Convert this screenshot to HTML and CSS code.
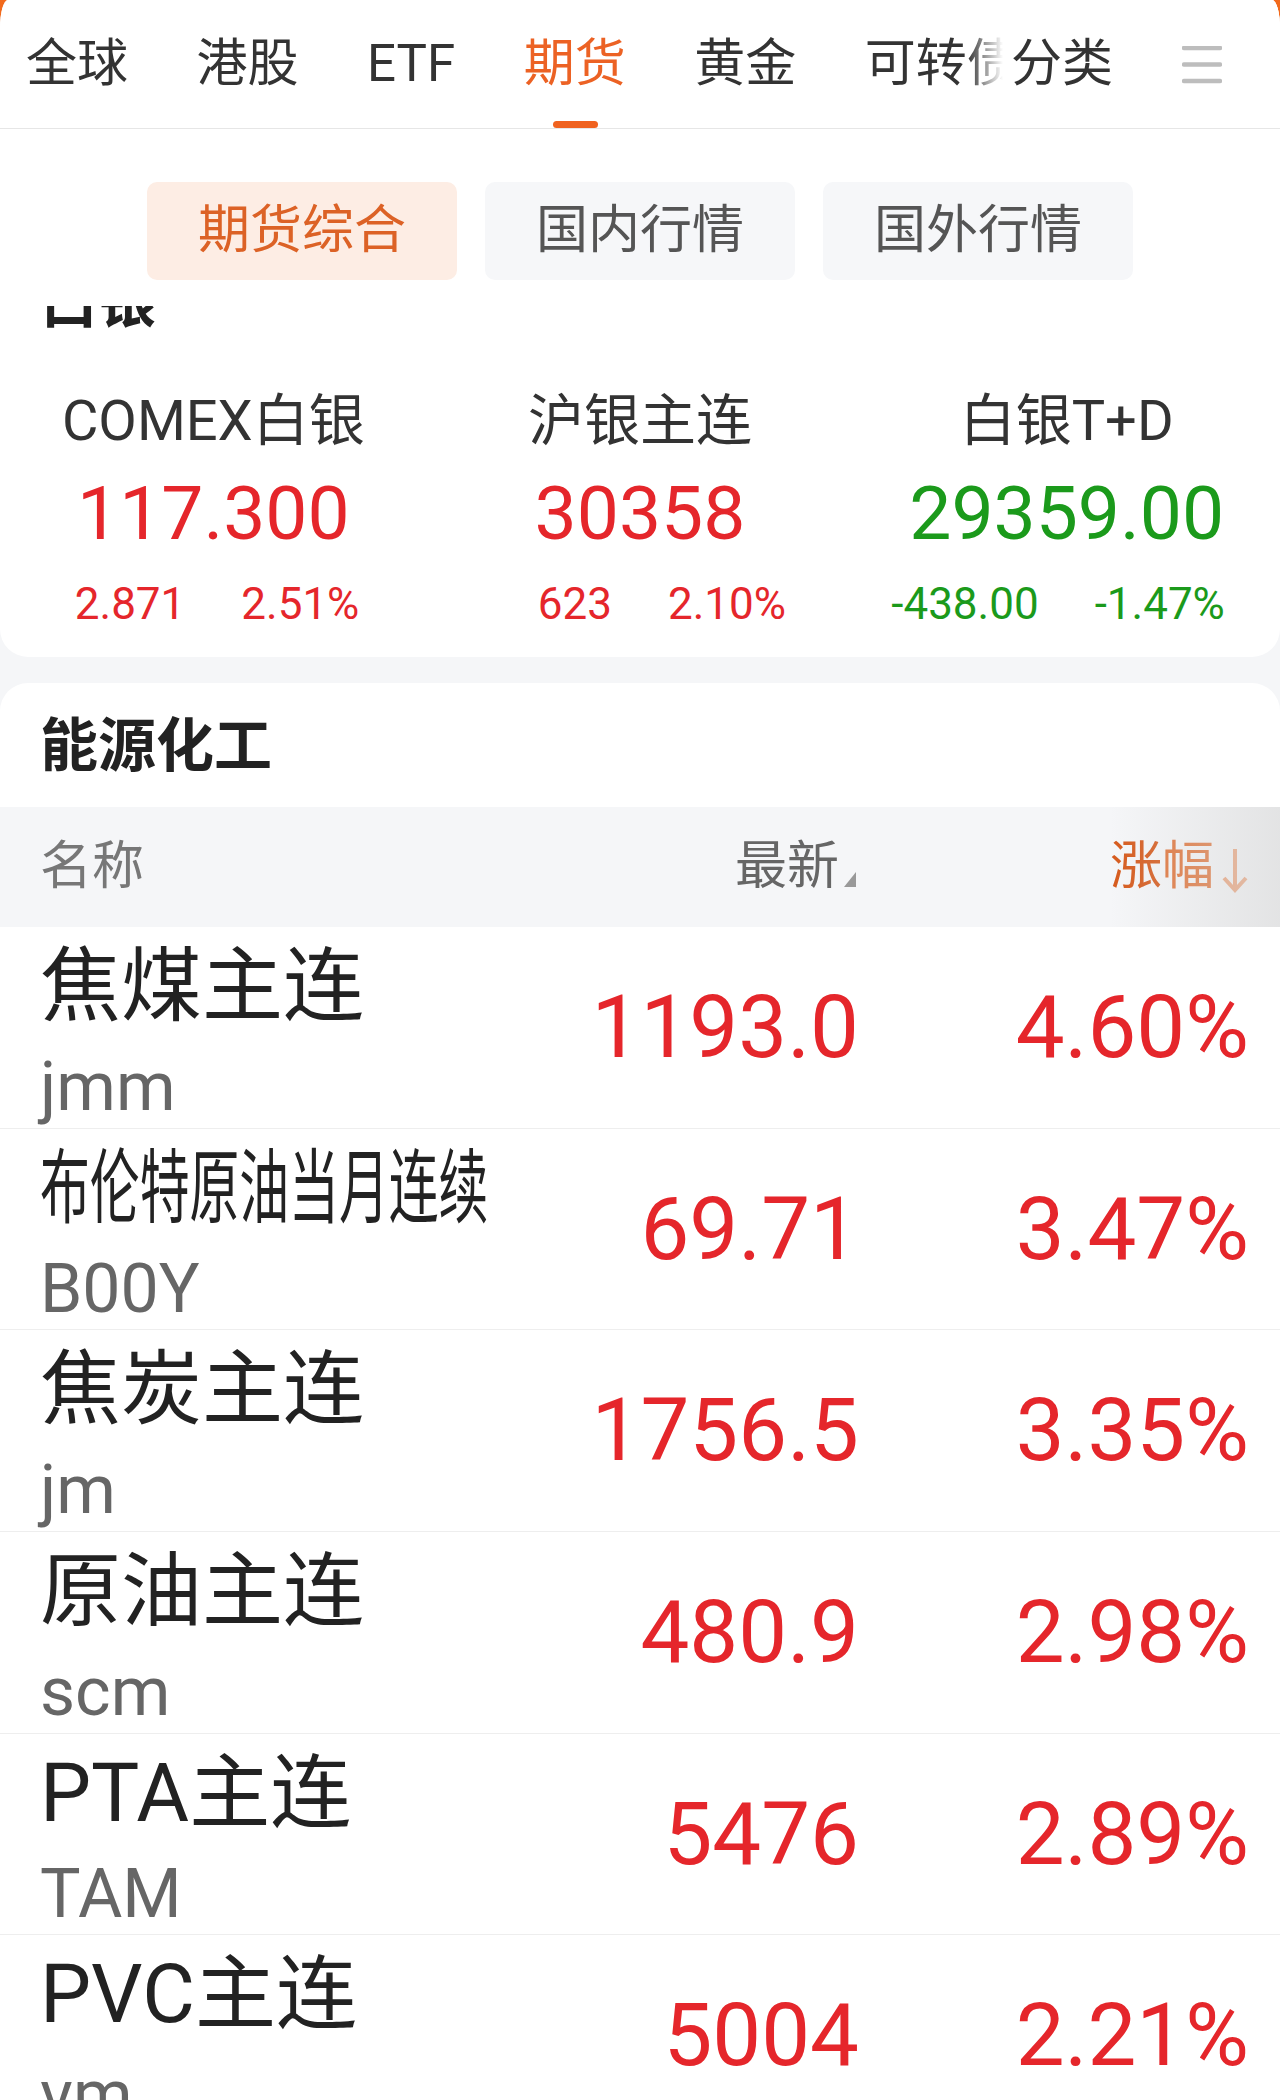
FILE: index.html
```html
<!DOCTYPE html>
<html lang="zh-CN">
<head>
  <meta charset="UTF-8">
  <title>期货</title>
  <link rel="stylesheet" href="styles.css">
</head>
<body>

  <div class="page">
    <header class="top">
      <nav class="tabs">
        <span class="tab">全球</span>
        <span class="tab">港股</span>
        <span class="tab">ETF</span>
        <span class="tab active">期货</span>
        <span class="tab">黄金</span>
        <span class="tab">可转债</span>
        <span class="tab">基金</span>
        <div class="tab-more">
          <span>分类</span>
          <svg class="menu-icon" width="40" height="38" viewBox="0 0 40 38">
            <line x1="2" y1="2" x2="38" y2="2" />
            <line x1="2" y1="18.5" x2="38" y2="18.5" />
            <line x1="2" y1="35" x2="38" y2="35" />
          </svg>
        </div>
      </nav>

      <div class="subtabs">
        <span class="subtab on">期货综合</span>
        <span class="subtab">国内行情</span>
        <span class="subtab">国外行情</span>
      </div>
    </header>

    <main class="scroll">
      <section class="card silver">
        <h3 class="card-title">白银</h3>
        <div class="quotes">
          <div class="quote">
            <div class="q-name">COMEX白银</div>
            <div class="q-price up">117.300</div>
            <div class="q-chg up"><span>2.871</span><span>2.51%</span></div>
          </div>
          <div class="quote">
            <div class="q-name">沪银主连</div>
            <div class="q-price up">30358</div>
            <div class="q-chg up"><span>623</span><span>2.10%</span></div>
          </div>
          <div class="quote">
            <div class="q-name">白银T+D</div>
            <div class="q-price down">29359.00</div>
            <div class="q-chg down"><span>-438.00</span><span>-1.47%</span></div>
          </div>
        </div>
      </section>

      <section class="card energy">
        <h3 class="card-title">能源化工</h3>

        <div class="thead">
          <span class="th">名称</span>
          <span class="th num">最新<i class="sort-tri"></i></span>
          <span class="th num sorted">涨<span class="fade">幅</span><svg class="sort-arrow" width="26" height="46" viewBox="0 0 26 46">
              <path d="M13 2 V43 M2 31 L13 43 L24 31" />
            </svg></span>
        </div>

        <div class="row">
          <div class="name"><div class="n-title">焦煤主连</div><div class="n-code">jmm</div></div>
          <div class="price up">1193.0</div>
          <div class="pct up">4.60%</div>
        </div>
        <div class="row">
          <div class="name"><div class="n-title"><span class="fit">布伦特原油当月连续</span></div><div class="n-code">B00Y</div></div>
          <div class="price up">69.71</div>
          <div class="pct up">3.47%</div>
        </div>
        <div class="row">
          <div class="name"><div class="n-title">焦炭主连</div><div class="n-code">jm</div></div>
          <div class="price up">1756.5</div>
          <div class="pct up">3.35%</div>
        </div>
        <div class="row">
          <div class="name"><div class="n-title">原油主连</div><div class="n-code">scm</div></div>
          <div class="price up">480.9</div>
          <div class="pct up">2.98%</div>
        </div>
        <div class="row">
          <div class="name"><div class="n-title">PTA主连</div><div class="n-code">TAM</div></div>
          <div class="price up">5476</div>
          <div class="pct up">2.89%</div>
        </div>
        <div class="row">
          <div class="name"><div class="n-title">PVC主连</div><div class="n-code">vm</div></div>
          <div class="price up">5004</div>
          <div class="pct up">2.21%</div>
        </div>
      </section>
    </main>
  </div>

</body>
</html>
```

FILE: styles.css
```css
body {
  margin: 0;
  padding: 0;
  height: 2100px;
  overflow: hidden;
  background: #f26a1c;
  font-family: Roboto, "Noto Sans CJK SC", sans-serif;
  color: #333;
}

.page {
  height: 2100px;
  background: #f5f6f8;
  border-radius: 8px 8px 0 0 / 28px 28px 0 0;
  overflow: hidden;
}

/* top tabs */
.top {
  background: #fff;
  height: 306px;
}

.tabs {
  position: relative;
  display: flex;
  gap: 68.5px;
  height: 128px;
  padding-left: 26px;
  border-bottom: 1px solid #e6e6e6;
  overflow: hidden;
  white-space: nowrap;
}

.tab {
  position: relative;
  font-size: 51px;
  line-height: 128px;
  color: #333;
}

.tab.active {
  color: #ec6224;
}

.tab.active::after {
  content: "";
  position: absolute;
  left: 50%;
  bottom: 0;
  width: 45px;
  height: 7px;
  margin-left: -22px;
  border-radius: 4px;
  background: #f0621f;
}

.tab-more {
  position: absolute;
  top: 0;
  right: 0;
  bottom: 0;
  display: flex;
  align-items: center;
  padding: 0 58px 0 44px;
  background: linear-gradient(to right, rgba(255,255,255,0), #fff 36px);
  font-size: 51px;
  line-height: 128px;
  color: #333;
}

.menu-icon {
  margin-left: 69px;
  margin-top: 2px;
}

.menu-icon line {
  stroke: #bdbdbd;
  stroke-width: 4.5;
  stroke-linecap: round;
}

.subtabs {
  display: flex;
  justify-content: center;
  gap: 28px;
  padding-top: 53px;
}

.subtab {
  width: 310px;
  height: 98px;
  border-radius: 10px;
  background: #f6f7f9;
  color: #555;
  font-size: 52px;
  line-height: 98px;
  text-align: center;
}

.subtab.on {
  background: #fdede4;
  color: #dc6226;
}

/* scrolled content */
.scroll {
  height: 1794px;
  overflow: hidden;
}

.card {
  background: #fff;
}

.silver {
  margin-top: -67px;
  padding-bottom: 28px;
  border-radius: 0 0 28px 28px;
}

.energy {
  margin-top: 26px;
  border-radius: 28px 28px 0 0;
}

.card-title {
  margin: 0;
  padding: 3px 0 0 40px;
  height: 121px;
  font-size: 58px;
  line-height: 121px;
  font-weight: bold;
  color: #222;
}

.quotes {
  display: grid;
  grid-template-columns: 1fr 1fr 1fr;
  padding-top: 26px;
  text-align: center;
}

.q-name {
  font-size: 56px;
  line-height: 64px;
  color: #333;
}

.q-price {
  margin-top: 15px;
  font-size: 75px;
  line-height: 90px;
}

.q-chg {
  display: grid;
  grid-template-columns: 1fr 1fr;
  gap: 56px;
  margin-top: 21px;
  font-size: 44px;
  line-height: 50px;
}

.q-chg span:first-child {
  text-align: right;
}

.q-chg span:last-child {
  text-align: left;
}

.up {
  color: #e5262b;
}

.down {
  color: #1b9a1b;
}

/* table */
.thead,
.row {
  display: grid;
  grid-template-columns: minmax(0, 1fr) 426px 390px;
  padding: 0 31px 0 40px;
}

.thead {
  position: relative;
  height: 120px;
  background: #f5f6f8;
  font-size: 52px;
  line-height: 120px;
  color: #777;
}

.thead::after {
  content: "";
  position: absolute;
  top: 0;
  right: 0;
  bottom: 0;
  width: 170px;
  background: linear-gradient(to right, rgba(215,215,215,0), rgba(215,215,215,0.6));
}

.th.num {
  text-align: right;
  color: #666;
}

.th:first-child {
  color: #777;
}

.sort-tri {
  display: inline-block;
  width: 0;
  height: 0;
  margin: 0 3px 0 5px;
  border-left: 12px solid transparent;
  border-bottom: 15px solid #999;
  vertical-align: -3px;
}

.th.sorted {
  color: #d65a1c;
}

.th.sorted .fade {
  color: #e07034;
}

.sort-arrow {
  margin: 0 1px 0 8px;
  vertical-align: middle;
}

.sort-arrow path {
  fill: none;
  stroke: #ec9c70;
  stroke-width: 4;
}

.row {
  height: 200.7px;
  border-bottom: 1px solid #eeeeee;
  background: #fff;
}

.name {
  padding-top: 15px;
  white-space: nowrap;
}

.n-title {
  font-size: 81px;
  line-height: 90px;
  color: #222;
}

.fit {
  display: inline-block;
  transform: scaleX(0.615);
  transform-origin: left center;
}

.n-code {
  margin-top: 17px;
  font-size: 68px;
  line-height: 76px;
  color: #666;
}

.price,
.pct {
  font-size: 87px;
  line-height: 200px;
  text-align: right;
}
```
